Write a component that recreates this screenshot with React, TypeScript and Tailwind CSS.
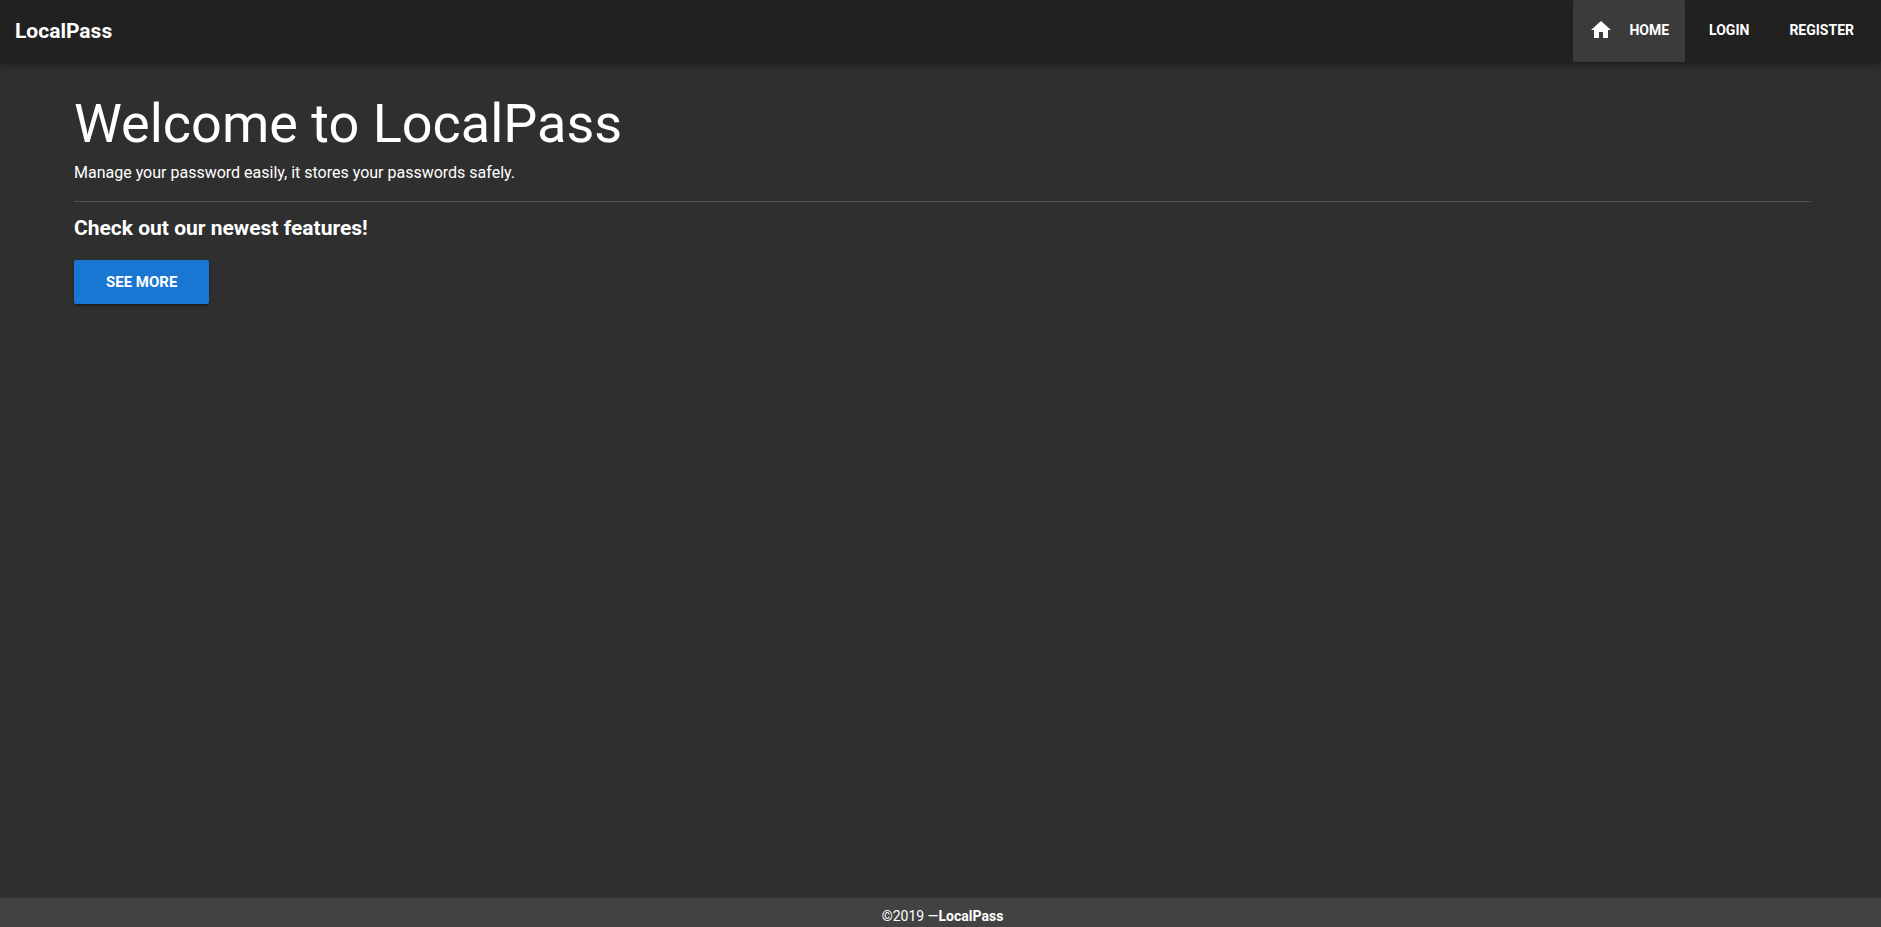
const navButton =
  "flex h-[62px] items-center gap-4 rounded-xs px-4 pb-0.5 text-sm font-bold uppercase hover:bg-[#3b3b3b]";

function HomeIcon() {
  return (
    <svg viewBox="0 0 24 24" className="size-6 fill-current" aria-hidden="true">
      <path d="M10 20v-6h4v6h5v-8h3L12 3 2 12h3v8z" />
    </svg>
  );
}

export default function App() {
  return (
    <div className="flex min-h-screen flex-col bg-[#2f2f2f] font-[Roboto,sans-serif] text-white">
      <header className="flex h-[62px] items-center justify-between bg-[#212121] pr-[11px] pl-[15px] shadow-[0_2px_4px_-1px_rgba(0,0,0,0.2),0_4px_5px_0_rgba(0,0,0,0.14),0_1px_10px_0_rgba(0,0,0,0.12)]">
        <div className="text-[21px] leading-8 font-bold">LocalPass</div>
        <nav className="flex gap-2">
          <a href="#home" aria-current="page" className={`${navButton} bg-[#3b3b3b]`}>
            <HomeIcon />
            Home
          </a>
          <a href="#login" className={navButton}>
            Login
          </a>
          <a href="#register" className={navButton}>
            Register
          </a>
        </nav>
      </header>

      <main className="flex-1 pt-[34px] pr-[70px] pl-[74px]">
        <h1 className="text-[54px] leading-14">Welcome to LocalPass</h1>
        <p className="mt-2 text-base leading-[26px]">
          Manage your password easily, it stores your passwords safely.
        </p>
        <hr className="mt-[15px] border-[#4f4f4f]" />
        <h2 className="mt-4 text-[21px] leading-5 font-bold">Check out our newest features!</h2>
        <button
          type="button"
          className="mt-[22px] h-11 rounded-xs bg-[#1976d2] px-8 text-[15px] font-bold uppercase shadow-[0_3px_1px_-2px_rgba(0,0,0,0.2),0_2px_2px_0_rgba(0,0,0,0.14),0_1px_5px_0_rgba(0,0,0,0.12)]"
        >
          See more
        </button>
      </main>

      <footer className="flex h-[29px] items-end justify-center bg-[#424242] pl-1 text-sm leading-[22px]">
        <span>
          ©2019 —<strong className="font-bold">LocalPass</strong>
        </span>
      </footer>
    </div>
  );
}
